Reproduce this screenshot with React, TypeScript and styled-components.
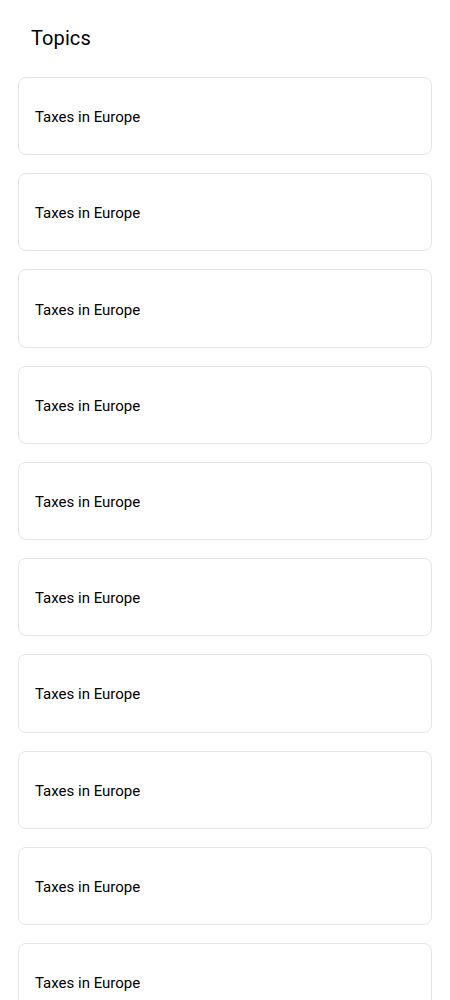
import React from "react";
import styled, { createGlobalStyle } from "styled-components";

const Global = createGlobalStyle`
  html, body { margin: 0; padding: 0; background: #ffffff; }
  body { font-family: Roboto, "Noto Sans", Arial, sans-serif; color: #000; }
`;

const Page = styled.div`
  display: flex;
  flex-direction: column;
  padding: 0 18px 18px;
`;

const Title = styled.h1`
  margin: 0;
  padding: 26px 0 0 13px;
  height: 77px;
  box-sizing: border-box;
  font-size: 20px;
  font-weight: 400;
  line-height: 24px;
  letter-spacing: 0.1px;
`;

const List = styled.div`
  display: flex;
  flex-direction: column;
  gap: 18px;
`;

const Card = styled.div`
  height: 78.22px;
  box-sizing: border-box;
  border: 1px solid #e6e6e6;
  border-radius: 8px;
  background: #fff;
  display: flex;
  align-items: center;
  padding: 2px 16px 0;
`;

const CardText = styled.span`
  font-size: 15px;
  font-weight: 400;
  line-height: 20px;
`;

const topics = Array.from({ length: 10 }, () => "Taxes in Europe");

export default function App() {
  return (
    <>
      <Global />
      <Page>
        <Title>Topics</Title>
        <List>
          {topics.map((t, i) => (
            <Card key={i}>
              <CardText>{t}</CardText>
            </Card>
          ))}
        </List>
      </Page>
    </>
  );
}
